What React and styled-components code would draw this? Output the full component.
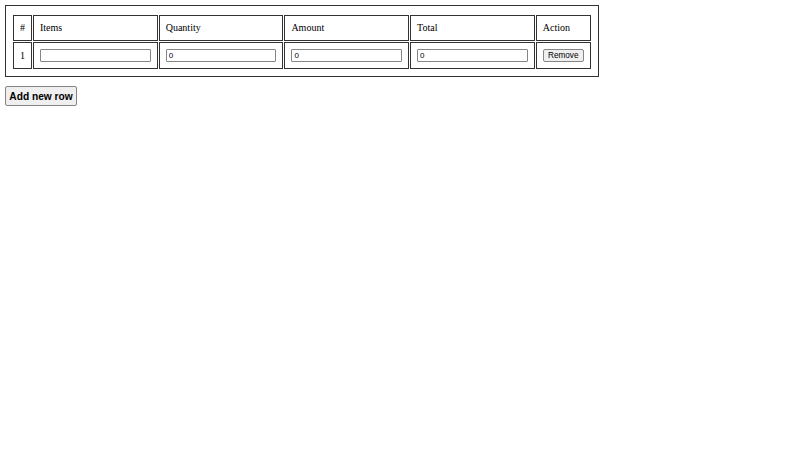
// Modules
import styled, { createGlobalStyle } from 'styled-components'
import { useState } from 'react'

// Styles
const GlobalStyle = createGlobalStyle`
  body {
    margin: 5px;
    background: #fff;
    color: #000;
    font-family: 'Liberation Serif', 'Times New Roman', serif;
  }
`

const TableBox = styled.div`
  width: fit-content;
  border: 1px solid #333;
  padding: 8px 6px 6px;
`

const Table = styled.table`
  border-collapse: separate;
  border-spacing: 1px;
  font-family: 'Liberation Serif', 'Times New Roman', serif;
  font-size: 10px;
`

const Cell = styled.td`
  border: 1px solid #333;
  padding: 6px;
  text-align: ${({ $center }) => ($center ? 'center' : 'left')};
  font-weight: normal;
  line-height: 12px;
  vertical-align: middle;
`

const Field = styled.input`
  box-sizing: border-box;
  display: block;
  width: 110.7px;
  height: 13px;
  margin: 0;
  padding: 0 2px;
  border: 1px solid #858585;
  border-radius: 1px;
  font-family: 'Liberation Sans', Arial, sans-serif;
  font-size: 8px;
  color: #000;
  background: #fff;
`

const SmallButton = styled.button`
  box-sizing: border-box;
  display: block;
  width: 41px;
  height: 13px;
  margin: 0;
  padding: 0;
  border: 1px solid #858585;
  border-radius: 2px;
  background: #efefef;
  font-family: 'Liberation Sans', Arial, sans-serif;
  font-size: 8.2px;
  line-height: 11px;
  color: #000;
`

const AddButton = styled.button`
  display: block;
  box-sizing: border-box;
  margin-top: 9px;
  width: 72px;
  height: 20px;
  padding: 0;
  border: 1px solid #858585;
  border-radius: 2px;
  background: #efefef;
  font-family: 'Liberation Sans', Arial, sans-serif;
  font-size: 10.2px;
  font-weight: bold;
  color: #000;
`

const columns = ['#', 'Items', 'Quantity', 'Amount', 'Total', 'Action']

const emptyRow = { item: '', quantity: 0, amount: 0, total: 0 }

const App = () => {
  const [rows, setRows] = useState([emptyRow])

  const update = (index, key, value) => {
    setRows(rows.map((row, i) => (i === index ? { ...row, [key]: value } : row)))
  }

  return (
    <>
      <GlobalStyle />
      <TableBox>
        <Table>
          <thead>
            <tr>
              {columns.map((col) => (
                <Cell as='th' key={col}>{col}</Cell>
              ))}
            </tr>
          </thead>
          <tbody>
            {rows.map((row, i) => (
              <tr key={i}>
                <Cell $center>{i + 1}</Cell>
                <Cell>
                  <Field value={row.item} onChange={(e) => update(i, 'item', e.target.value)} />
                </Cell>
                <Cell>
                  <Field value={row.quantity} onChange={(e) => update(i, 'quantity', e.target.value)} />
                </Cell>
                <Cell>
                  <Field value={row.amount} onChange={(e) => update(i, 'amount', e.target.value)} />
                </Cell>
                <Cell>
                  <Field value={row.total} onChange={(e) => update(i, 'total', e.target.value)} />
                </Cell>
                <Cell>
                  <SmallButton onClick={() => setRows(rows.filter((_, j) => j !== i))}>Remove</SmallButton>
                </Cell>
              </tr>
            ))}
          </tbody>
        </Table>
      </TableBox>
      <AddButton onClick={() => setRows([...rows, emptyRow])}>
        Add new row
      </AddButton>
    </>
  )
}

export default App
